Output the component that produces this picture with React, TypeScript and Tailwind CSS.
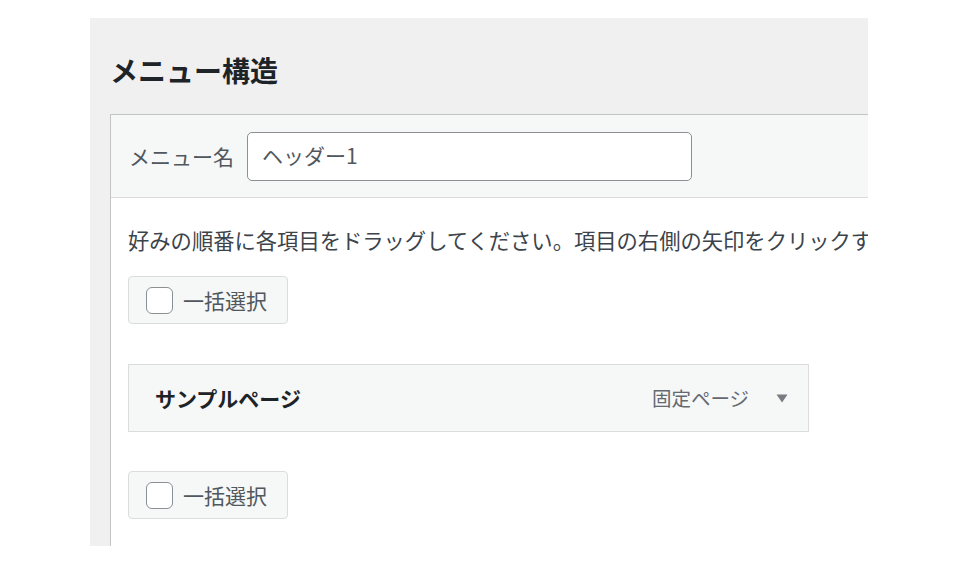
import React from 'react';

const font = { fontFamily: '"Noto Sans CJK JP", "Noto Sans", sans-serif' };

// bulk select toggle, shown above and below the menu items
function BulkSelect() {
  return (
    <div className="flex h-[48px] w-[160px] items-center gap-[10px] rounded-[4px] border border-[#dcdcde] bg-[#f6f7f7] pl-[17px]">
      <span className="h-[27px] w-[27px] shrink-0 rounded-[6px] border-[1.5px] border-[#8c8f94] bg-white" />
      <span className="text-[21px] leading-none text-[#50575e]">一括選択</span>
    </div>
  );
}

export default function App() {
  return (
    <div className="h-[574px] w-[976px] bg-white pl-[90px] pt-[18px]" style={font}>
      <div className="h-[528px] w-[778px] overflow-hidden bg-[#f0f0f1] pl-[20px]">
        <h2 className="pt-[36px] text-[28px] font-bold leading-[32px] text-[#1d2327]">メニュー構造</h2>

        <div className="mt-[28px] w-[900px] border border-[#c3c4c7] bg-white">
          {/* Menu name row */}
          <div className="flex h-[83px] items-center gap-[13px] border-b border-[#dcdcde] bg-[#f6f7f7] pl-[18px]">
            <span className="text-[21px] leading-none text-[#50575e]">メニュー名</span>
            <div className="flex h-[49px] w-[445px] items-center rounded-[5px] border border-[#8c8f94] bg-white pl-[14px] text-[21px] text-[#50575e]">
              ヘッダー1
            </div>
          </div>

          <div className="pl-[17px] pt-[27px] pb-[40px]">
            <p className="whitespace-nowrap text-[21.3px] leading-[30px] text-[#3c434a]">
              好みの順番に各項目をドラッグしてください。項目の右側の矢印をクリックすると、追加の設定オプションが表示されます。
            </p>

            <div className="mt-[21px]">
              <BulkSelect />
            </div>

            {/* Menu item */}
            <div className="mt-[40px] flex h-[68px] w-[681px] items-center justify-between border border-[#dcdcde] bg-[#f6f7f7] pl-[26px] pr-[20px]">
              <span className="text-[21px] font-bold leading-none text-[#1d2327]">サンプルページ</span>
              <div className="flex items-center gap-[27px]">
                <span className="text-[19.5px] leading-none text-[#646970]">固定ページ</span>
                <svg width="12" height="9" viewBox="0 0 12 9" className="mt-[1px]">
                  <path d="M0.5 0.5 H11.5 L6 8.5 Z" fill="#787c82" />
                </svg>
              </div>
            </div>

            <div className="mt-[39px]">
              <BulkSelect />
            </div>
          </div>
        </div>
      </div>
    </div>
  );
}
